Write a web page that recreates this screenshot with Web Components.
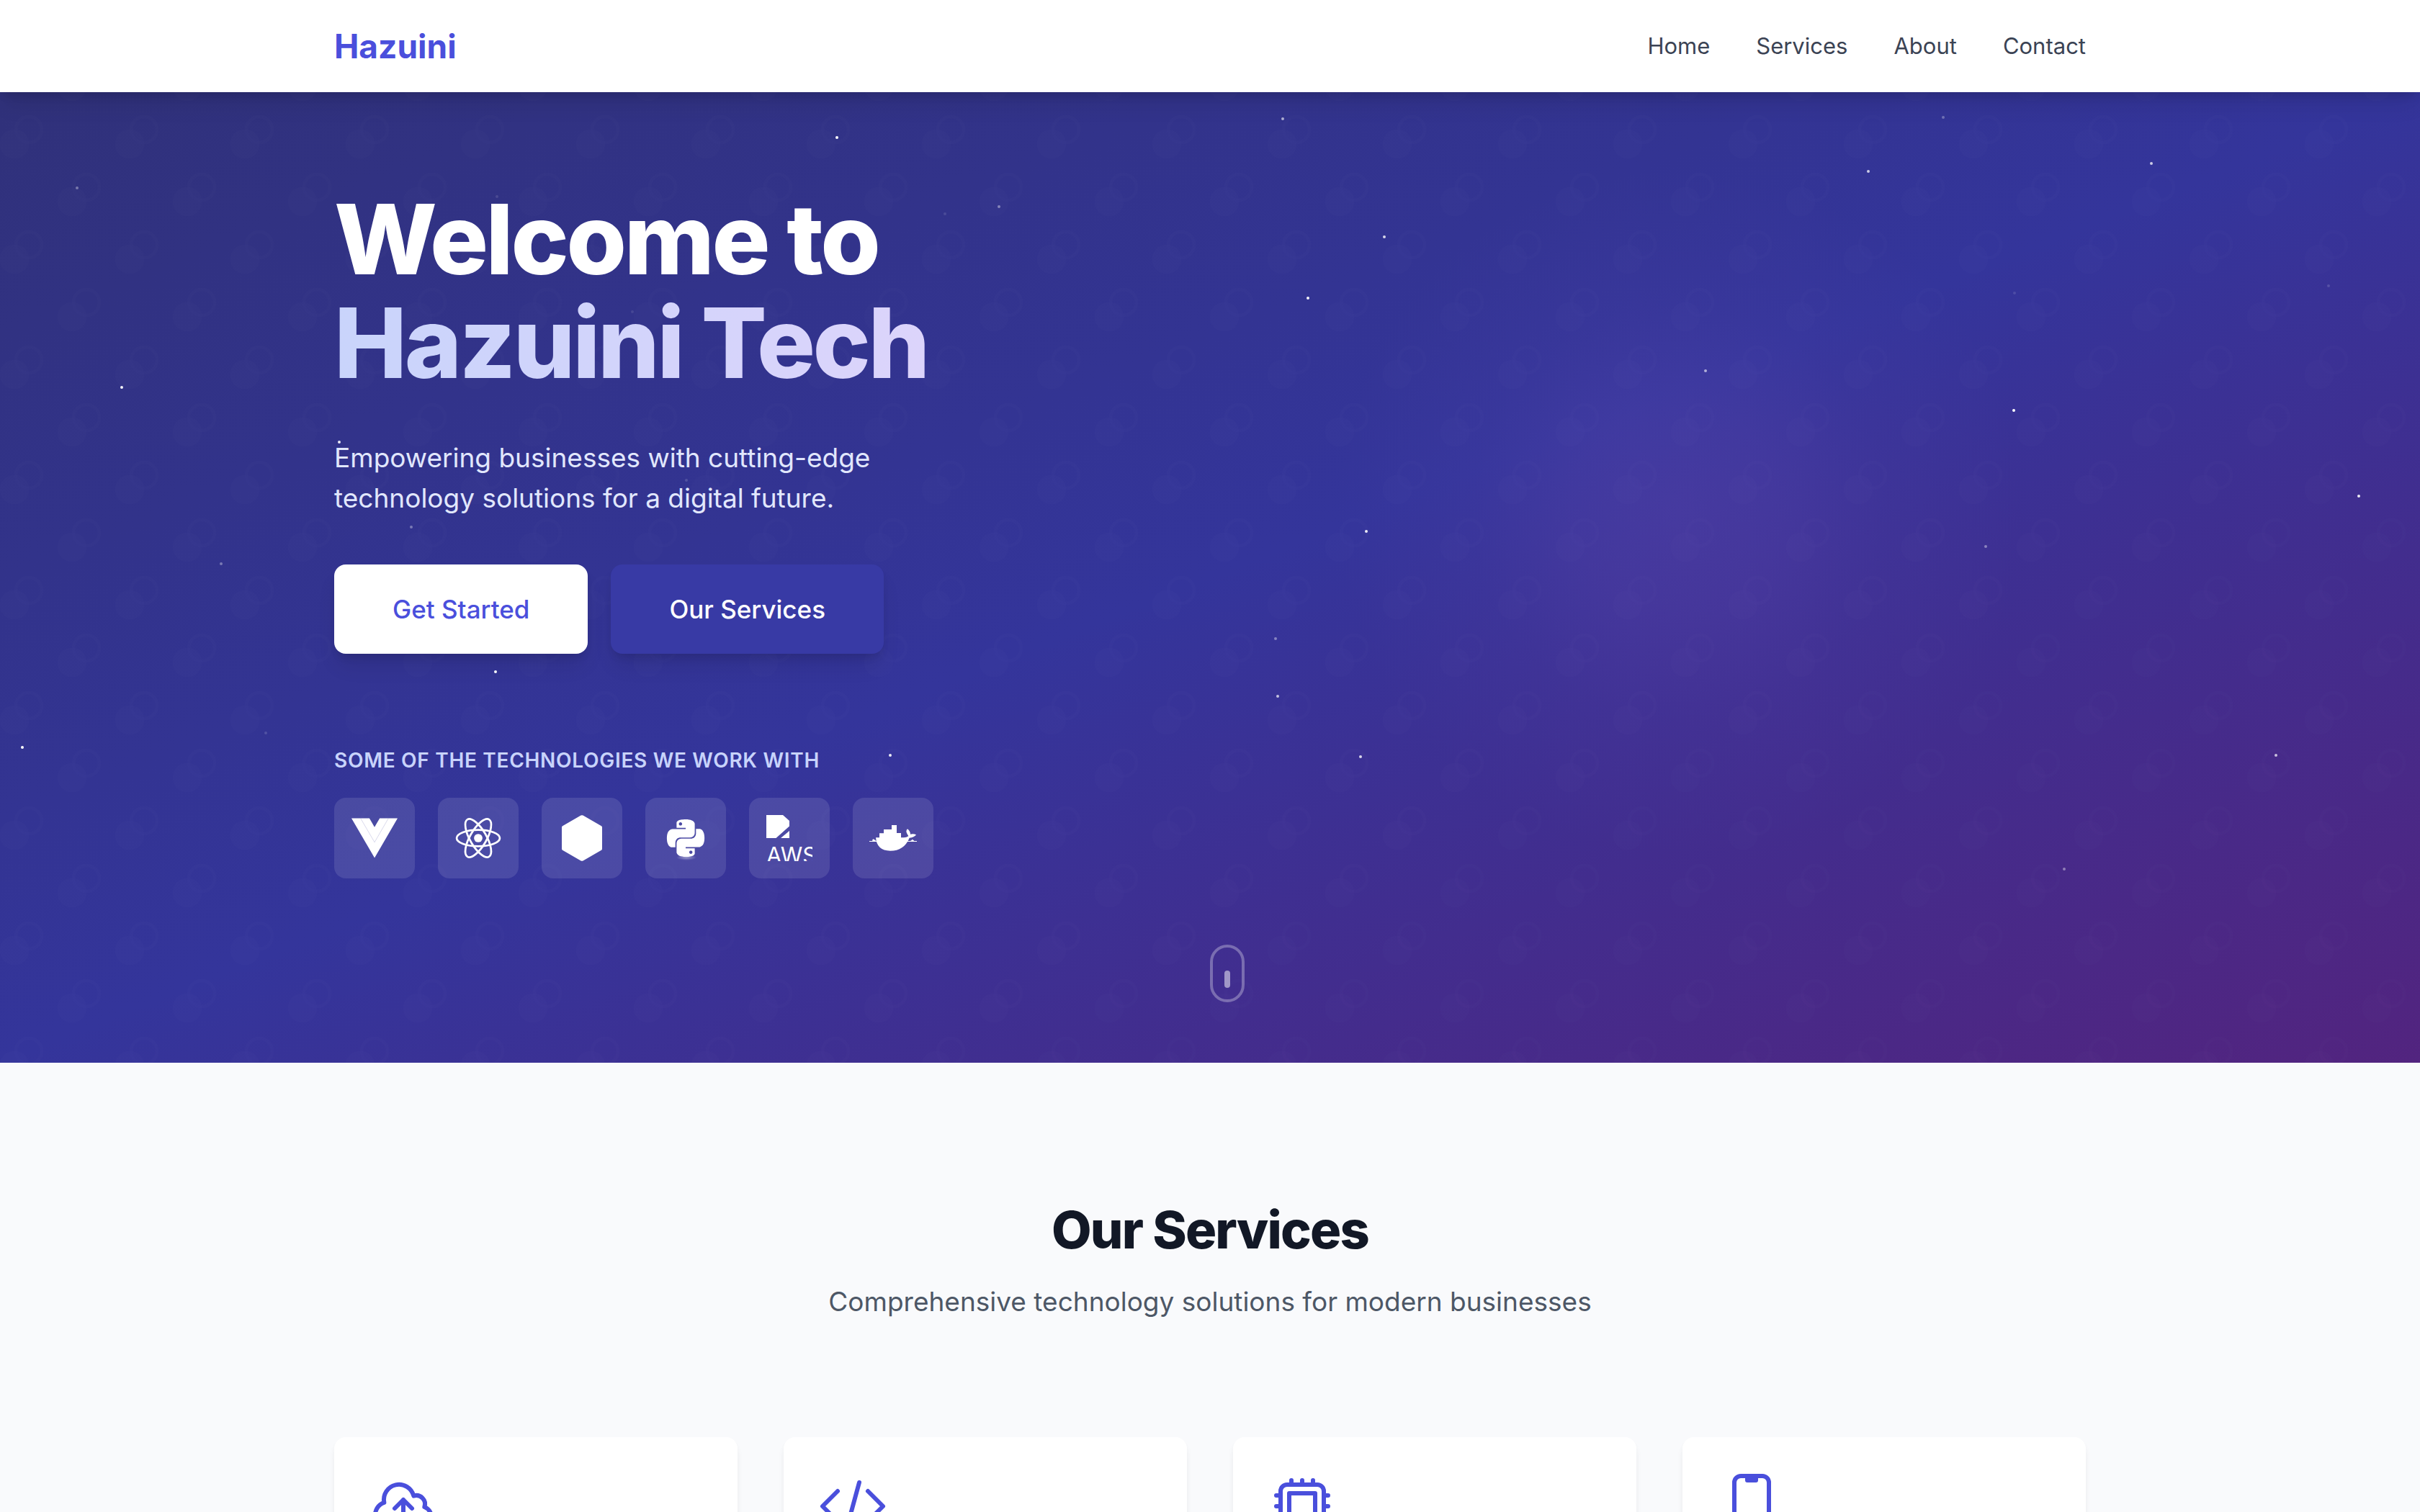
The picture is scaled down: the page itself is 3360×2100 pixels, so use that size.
<!DOCTYPE html>
<html lang="en">
<head>
<meta charset="utf-8">
<title>Hazuini</title>
<style>
  :root {
    --brand: #4a4fdc;
    --ink: #121826;
    --muted: #4d5766;
    --gutter: 64px;
    --content: 2432px;
  }
  html { scrollbar-width: none; }
  body { margin: 0; background: #f9fafc; font-family: Inter, "Liberation Sans", sans-serif; }
</style>
</head>
<body>
<site-header brand="Hazuini">
  <nav-link href="#home">Home</nav-link>
  <nav-link href="#services">Services</nav-link>
  <nav-link href="#about">About</nav-link>
  <nav-link href="#contact">Contact</nav-link>
</site-header>
<hero-banner id="home">
  <span slot="title">Welcome to</span>
  <span slot="accent">Hazuini Tech</span>
  <span slot="lead">Empowering businesses with cutting-edge technology solutions for a digital future.</span>
  <action-button slot="actions" kind="primary">Get Started</action-button>
  <action-button slot="actions">Our Services</action-button>
  <span slot="caption">SOME OF THE TECHNOLOGIES WE WORK WITH</span>
  <tech-tile slot="tech" name="vue"></tech-tile>
  <tech-tile slot="tech" name="react"></tech-tile>
  <tech-tile slot="tech" name="node"></tech-tile>
  <tech-tile slot="tech" name="python"></tech-tile>
  <tech-tile slot="tech" name="aws"></tech-tile>
  <tech-tile slot="tech" name="docker"></tech-tile>
</hero-banner>
<services-section id="services">
  <span slot="title">Our Services</span>
  <span slot="lead">Comprehensive technology solutions for modern businesses</span>
  <service-card icon="cloud"></service-card>
  <service-card icon="code"></service-card>
  <service-card icon="chip"></service-card>
  <service-card icon="phone"></service-card>
</services-section>

<script>
const base = (name, render) => customElements.define(name, class extends HTMLElement {
  constructor() {
    super();
    this.attachShadow({ mode: 'open' });
  }
  connectedCallback() {
    this.shadowRoot.innerHTML = render(this);
  }
});

base('site-header', el => `
<style>
  :host { display: block; position: relative; z-index: 2; background: #fff; box-shadow: 0 20px 30px -6px rgba(0,0,0,.1), 0 8px 12px -4px rgba(0,0,0,.1); }
  header { box-sizing: border-box; max-width: calc(var(--content) + 2 * var(--gutter)); min-height: 128px; margin: 0 auto; padding: 0 var(--gutter); display: flex; align-items: center; justify-content: space-between; }
  .logo { font-size: 46px; font-weight: 700; line-height: 64px; color: var(--brand); text-decoration: none; }
  nav { display: flex; gap: 64px; }
</style>
<header><a class="logo" href="#home">${el.getAttribute('brand')}</a><nav aria-label="Main"><slot></slot></nav></header>`);

base('nav-link', el => `
<style>
  :host { display: block; }
  a { font-size: 31px; line-height: 48px; color: #3b4354; text-decoration: none; }
</style>
<a href="${el.getAttribute('href')}"><slot></slot></a>`);

base('action-button', el => {
  const primary = el.getAttribute('kind') === 'primary';
  return `
<style>
  :host { display: block; }
  button { font: 500 35px/56px Inter, "Liberation Sans", sans-serif; height: 124px; padding: 0 81px; border: 0; border-radius: 16px;
    color: ${primary ? 'var(--brand)' : '#fff'}; background: ${primary ? '#fff' : '#383aa5'};
    box-shadow: 0 20px 30px -6px rgba(0,0,0,.1), 0 8px 12px -4px rgba(0,0,0,.1); }
</style>
<button type="button"><slot></slot></button>`;
});

const stars = [
  [1162,191,1],[1781,165,.6],[2698,163,.3],[2594,238,.75],[2987,227,.75],[107,261,.35],[1387,287,.4],[1922,329,.8],
  [1816,414,.95],[169,538,.95],[2368,515,.6],[2796,570,1],[471,614,.9],[3275,689,.9],[1897,738,.9],[2757,759,.4],
  [307,783,.35],[571,732,.35],[1771,887,.4],[688,933,1],[1774,967,.7],[1889,1051,.8],[31,1038,1],[1236,1049,.9],
  [3160,1049,.7],[369,1018,.15],[2866,1207,.4],[3233,397,.15],[1312,297,.12],[2797,407,.12],[690,273,.12],[878,433,.1],[953,667,.15]
];

base('star-field', () => `
<style>
  :host { display: block; }
  svg { display: block; width: 100%; height: 100%; }
</style>
<svg viewBox="0 128 3360 1348" preserveAspectRatio="xMidYMid slice" aria-hidden="true">
  <defs>
    <pattern id="dots" x="0" y="128" width="160" height="160" patternUnits="userSpaceOnUse">
      <g fill="#fff" fill-opacity=".006"><circle cx="100" cy="152" r="20"/><circle cx="100" cy="-8" r="20"/><circle cx="20" cy="72" r="20"/></g>
      <g fill="none" stroke="#fff" stroke-opacity=".008" stroke-width="4"><circle cx="120" cy="132" r="18"/><circle cx="40" cy="52" r="18"/></g>
    </pattern>
    <radialGradient id="glow"><stop offset="0" stop-color="#8b5cc6" stop-opacity=".17"/><stop offset=".3" stop-color="#8b5cc6" stop-opacity=".13"/><stop offset=".6" stop-color="#8b5cc6" stop-opacity=".05"/><stop offset="1" stop-color="#8b5cc6" stop-opacity="0"/></radialGradient>
  </defs>
  <rect y="128" width="3360" height="1348" fill="url(#dots)"/>
  <circle cx="2330" cy="710" r="480" fill="url(#glow)"/>
  ${stars.map(([x, y, o]) => `<circle cx="${x}" cy="${y}" r="2" fill="#fff" opacity="${o}"/>`).join('')}
</svg>`);

base('hero-banner', () => `
<style>
  :host { display: block; position: relative; background: linear-gradient(to bottom right, #30317a, #34359b 50%, #52247f); }
  star-field { position: absolute; inset: 0; }
  .wrap { position: relative; box-sizing: border-box; max-width: calc(var(--content) + 2 * var(--gutter)); margin: 0 auto; padding: 132px var(--gutter) 256px; display: flex; flex-direction: column; align-items: flex-start; }
  h1 { margin: 0; font-size: 135px; font-weight: 800; line-height: 144px; letter-spacing: -.025em; color: #fff; display: flex; flex-direction: column; align-items: flex-start; }
  .accent { color: transparent; background: linear-gradient(to right, #c9d4fb, #dcd4fb); -webkit-background-clip: text; background-clip: text; }
  p { margin: 0; }
  .lead { max-width: 800px; margin: 60px 0 64px; font-size: 37px; line-height: 56px; color: #e1e7fd; }
  .row { display: flex; gap: 32px; }
  .caption { margin: 128px 0 32px; font-size: 28px; font-weight: 600; line-height: 40px; letter-spacing: .025em; color: #c8d3fb; }
  .mouse { position: absolute; left: 50%; bottom: 84px; box-sizing: border-box; width: 48px; height: 80px; border: 4px solid rgba(255,255,255,.3); border-radius: 24px; display: flex; justify-content: center; padding-top: 32px; }
  .mouse i { width: 8px; height: 24px; border-radius: 4px; background: rgba(255,255,255,.5); }
</style>
<star-field></star-field>
<div class="wrap">
  <h1><slot name="title"></slot><span class="accent"><slot name="accent"></slot></span></h1>
  <p class="lead"><slot name="lead"></slot></p>
  <div class="row"><slot name="actions"></slot></div>
  <p class="caption"><slot name="caption"></slot></p>
  <div class="row"><slot name="tech"></slot></div>
</div>
<div class="mouse"><i></i></div>`);

const logos = {
  vue: `<svg viewBox="0 0 128 128"><path fill="#fff" d="M0 9h49.8L64 33.5 78.4 9H128L64.1 119z"/><path fill="none" stroke="#4a4aa5" stroke-opacity=".35" stroke-width="1.2" d="M25.5 9.5L64.1 75.5 102.3 9.5"/></svg>`,
  react: `<svg viewBox="-11.75 -11.75 23.5 23.5"><circle r="2.15" fill="#fff"/><g fill="none" stroke="#fff"><ellipse rx="11" ry="4.2"/><ellipse rx="11" ry="4.2" transform="rotate(60)"/><ellipse rx="11" ry="4.2" transform="rotate(120)"/></g></svg>`,
  node: `<svg viewBox="0 0 64 64"><path fill="#fff" d="M30.5.6q1.5-.9 3 0L59 15.2q1 .6 1 1.8v30q0 1.200-1 1.800L33.500 63.400q-1.500.9-3 0L5 48.800q-1-.6-1-1.800V17q0-1.200 1-1.800z"/></svg>`,
  python: `<svg viewBox="0 0 64 64"><defs><radialGradient id="s"><stop offset="0" stop-color="#fff" stop-opacity=".45"/><stop offset="1" stop-color="#fff" stop-opacity="0"/></radialGradient></defs><ellipse cx="33" cy="59" rx="14" ry="4" fill="url(#s)"/><path transform="translate(6 6) scale(2.167)" fill="#fff" d="M14.25.18l.9.2.73.26.59.3.45.32.34.34.25.34.16.33.1.3.04.26.02.2-.01.13V8.5l-.05.63-.13.55-.21.46-.26.38-.3.31-.33.25-.35.19-.35.14-.33.1-.3.07-.26.04-.21.02H8.77l-.69.05-.59.14-.5.22-.41.27-.33.32-.27.35-.2.36-.15.37-.1.35-.07.32-.04.27-.02.21v3.06H3.17l-.21-.03-.28-.07-.32-.12-.35-.18-.36-.26-.36-.36-.35-.46-.32-.59-.28-.73-.21-.88-.14-1.05-.05-1.23.06-1.22.16-1.04.24-.87.32-.71.36-.57.4-.44.42-.33.42-.24.4-.16.36-.1.32-.05.24-.01h.16l.06.01h8.16v-.83H6.18l-.01-2.75-.02-.37.05-.34.11-.31.17-.28.25-.26.31-.23.38-.2.44-.18.51-.15.58-.12.64-.1.71-.06.77-.04.84-.02 1.27.05zm-6.3 1.98l-.23.33-.08.41.08.41.23.34.33.22.41.09.41-.09.33-.22.23-.34.08-.41-.08-.41-.23-.33-.33-.22-.41-.09-.41.09zm13.09 3.95l.28.06.32.12.35.18.36.27.36.35.35.47.32.59.28.73.21.88.14 1.04.05 1.23-.06 1.23-.16 1.04-.24.86-.32.71-.36.57-.4.45-.42.33-.42.24-.4.16-.36.09-.32.05-.24.02-.16-.01h-8.22v.82h5.84l.01 2.76.02.36-.05.34-.11.31-.17.29-.25.25-.31.24-.38.2-.44.17-.51.15-.58.13-.64.09-.71.07-.77.04-.84.01-1.27-.04-1.07-.14-.9-.2-.73-.25-.59-.3-.45-.33-.34-.34-.25-.34-.16-.33-.1-.3-.04-.25-.02-.2.01-.13v-5.34l.05-.64.13-.54.21-.46.26-.38.3-.32.33-.24.35-.2.35-.14.33-.1.3-.06.26-.04.21-.02.13-.01h5.84l.69-.05.59-.14.5-.21.41-.28.33-.32.27-.35.2-.36.15-.36.1-.35.07-.32.04-.28.02-.21V6.07h2.09l.14.01zm-6.47 14.25l-.23.33-.08.41.08.41.23.33.33.23.41.08.41-.08.33-.23.23-.33.08-.41-.08-.41-.23-.33-.33-.23-.41-.08-.41.08z"/></svg>`,
  aws: `<div class="alt"><svg class="broken" viewBox="0 0 32 32"><path fill="#fff" d="M0 0h23l9 8v7.500L13.500 32H0zM32 22v10H20z"/></svg><span>AWS</span></div>`,
  docker: `<svg viewBox="984 96 192 192"><path fill="#fff" d="M1008 190h15v-18h18v-16h33v-18h21v33h18v19h12q11 0 19-6-6-8-9-18 0-9 5-12 11 8 12 22 13-3 24 2-8 12-28 13-22 54-80 54-56 0-60-55z"/><path fill="#fff" d="M981 204h198v3H981zM994 204v-5l4-3 4 3 5 2v3zM1152 204l5-3 3-4 5 4 3 3z"/></svg>`
};

base('tech-tile', el => `
<style>
  :host { box-sizing: border-box; display: block; width: 112px; height: 112px; padding: 24px; border-radius: 16px; background: rgba(255,255,255,.11); }
  svg { display: block; width: 64px; height: 64px; overflow: visible; }
  .alt { width: 64px; height: 64px; overflow: hidden; color: #fff; font-size: 31px; line-height: 48px; }
  .alt .broken { width: 32px; height: 32px; }
  .alt span { display: block; }
</style>
${logos[el.getAttribute('name')]}`);

base('services-section', () => `
<style>
  :host { display: block; background: #f9fafc; }
  section { box-sizing: border-box; max-width: calc(var(--content) + 2 * var(--gutter)); margin: 0 auto; padding: 192px var(--gutter); }
  h2 { margin: 0 0 32px; font-size: 72px; font-weight: 800; line-height: 80px; letter-spacing: -.025em; text-align: center; color: var(--ink); }
  p { margin: 0 0 160px; font-size: 37px; line-height: 56px; text-align: center; color: var(--muted); }
  .grid { display: grid; grid-template-columns: repeat(4, 1fr); gap: 64px; }
</style>
<section>
  <h2><slot name="title"></slot></h2>
  <p><slot name="lead"></slot></p>
  <div class="grid"><slot></slot></div>
</section>`);

const glyphs = {
  cloud: 'M12 16.5V9.75m0 0l3 3m-3-3l-3 3M6.75 19.5a4.5 4.5 0 01-1.41-8.775 5.25 5.25 0 0110.233-2.33 3 3 0 013.758 3.848A3.752 3.752 0 0118 19.5H6.75z',
  code: 'M17.25 6.75L22.5 12l-5.25 5.25m-10.5 0L1.500 12l5.250-5.250m7.500-3l-4.500 16.500',
  chip: 'M8.25 3v1.5M4.5 8.25H3m18 0h-1.5M4.5 12H3m18 0h-1.5m-15 3.75H3m18 0h-1.5M8.25 19.5V21M12 3v1.5m0 15V21m3.75-18v1.5m0 15V21m-9-1.5h10.5a2.25 2.25 0 002.25-2.25V6.75a2.25 2.25 0 00-2.25-2.25H6.75A2.25 2.25 0 004.5 6.75v10.5a2.25 2.25 0 002.25 2.25zm.75-12h9v9h-9v-9z',
  phone: 'M10.5 1.5H8.25A2.25 2.25 0 006 3.75v16.5a2.25 2.25 0 002.25 2.25h7.5A2.25 2.25 0 0018 20.25V3.75a2.25 2.25 0 00-2.25-2.25H13.5m-3 0V3h3V1.5m-3 0h3m-3 18.75h3'
};

base('service-card', el => `
<style>
  :host { display: block; padding: 48px; border-radius: 16px; background: #fff; box-shadow: 0 8px 12px -2px rgba(0,0,0,.06), 0 4px 8px -2px rgba(0,0,0,.04); }
  svg { display: block; width: 96px; height: 96px; }
</style>
<svg viewBox="0 0 24 24" fill="none" stroke="#4a4fdc" stroke-width="1.5" stroke-linecap="round" stroke-linejoin="round" aria-hidden="true"><path d="${glyphs[el.getAttribute('icon')]}"/></svg>`);
</script>
</body>
</html>
